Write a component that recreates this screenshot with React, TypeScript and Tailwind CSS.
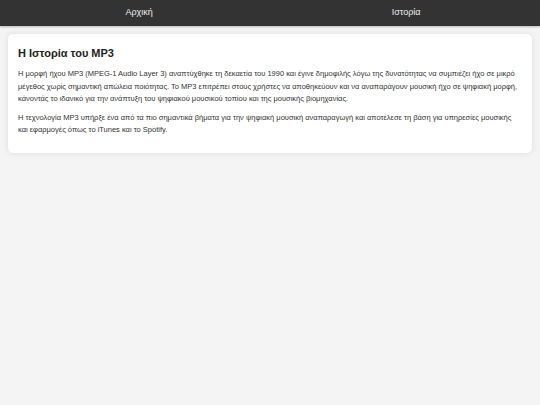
export default function App() {
  return (
    <div className="min-h-screen bg-[#f4f4f4] font-['Liberation_Sans',Arial,sans-serif] text-[#333]">
      <nav className="flex h-[26px] items-center justify-around bg-[#333] pl-[6px] text-[9px] text-[#eee] shadow-[0_1px_2px_rgba(0,0,0,0.25)]">
        <a className="px-2">Αρχική</a>
        <a className="px-2">Ιστορία</a>
      </nav>
      <main className="p-2">
        <section className="rounded-[5px] bg-white px-[10px] pt-[12px] pb-[16px] shadow-[0_0_6px_rgba(0,0,0,0.1)]">
          <h2 className="mb-[8px] text-[11px] leading-[14px] font-bold text-[#222]">Η Ιστορία του MP3</h2>
          <p className="mb-[6px] text-[7.5px] leading-[12.5px]">
            Η μορφή ήχου MP3 (MPEG-1 Audio Layer 3) αναπτύχθηκε τη δεκαετία του 1990 και έγινε δημοφιλής λόγω της δυνατότητας να συμπιέζει ήχο σε μικρό μέγεθος χωρίς σημαντική απώλεια ποιότητας. Το MP3 επιτρέπει στους χρήστες να αποθηκεύουν και να αναπαράγουν μουσική ήχο σε ψηφιακή μορφή, κάνοντάς το ιδανικό για την ανάπτυξη του ψηφιακού μουσικού τοπίου και της μουσικής βιομηχανίας.
          </p>
          <p className="text-[7.5px] leading-[12.5px]">
            Η τεχνολογία MP3 υπήρξε ένα από τα πιο σημαντικά βήματα για την ψηφιακή μουσική αναπαραγωγή και αποτέλεσε τη βάση για υπηρεσίες μουσικής και εφαρμογές όπως το iTunes και το Spotify.
          </p>
        </section>
      </main>
    </div>
  );
}
